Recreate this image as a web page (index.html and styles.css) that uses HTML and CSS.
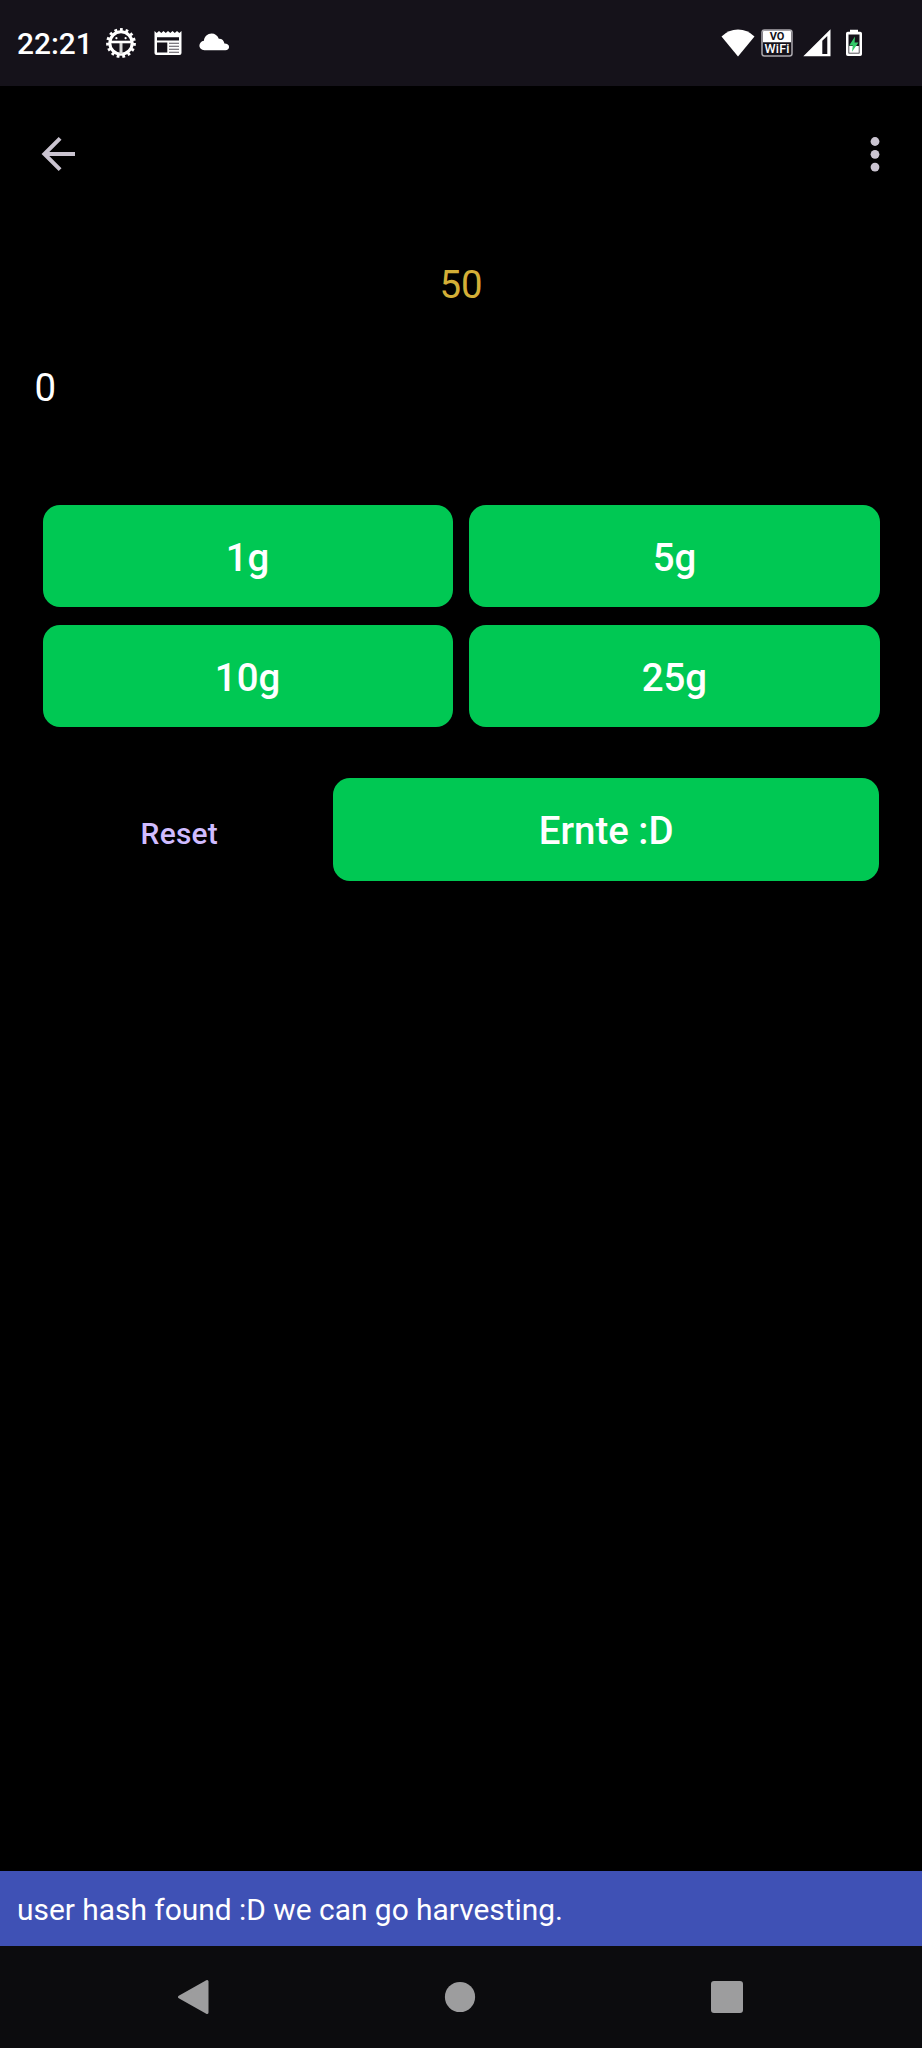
FILE: index.html
```html
<!DOCTYPE html>
<html lang="de">
<head>
<meta charset="utf-8">
<title>Ernte</title>
<link rel="stylesheet" href="styles.css">
</head>
<body>
<div class="screen">
  <header class="status">
    <div class="status-left">
      <span class="clock">22:21</span>
      <svg width="32" height="32" viewBox="-16 -16 32 32">
        <circle r="11.2" fill="none" stroke="#fff" stroke-width="3"/>
        <circle r="13.4" fill="none" stroke="#fff" stroke-width="3" stroke-dasharray="2.8 2.81"/>
        <path d="M-11-1H11" stroke="#fff" stroke-width="2.6"/>
        <path d="M0 0V11" stroke="#d8d8d8" stroke-width="3"/>
        <circle cx="-4.6" cy="-4.8" r="1.1" fill="#fff"/><circle cx="4.6" cy="-4.8" r="1.1" fill="#fff"/>
      </svg>
      <svg class="news" width="28" height="26" viewBox="0 0 28 26">
        <path d="M.5 1l2.2 2L5 1l2.300 2L9.500 1l2.300 2L14 1l2.300 2 2.200-2 2.300 2L23 1l2.300 2 2.200-2v22q0 2-2 2h-23q-2 0-2-2z" fill="#fff"/>
        <path d="M3 7.200h22v3.200H3zM3 12.400h10.300v10.200H3z" fill="#15121a"/>
        <path d="M15 13.200h10M15 16.200h10M15 19.200h10M15 22.200h10" stroke="#55525a" stroke-width="1.100"/>
      </svg>
      <svg class="cloud" width="31" height="18" viewBox="0 0 31 18">
        <path d="M5.500 17.200C2.400 17.200.4 15.200.4 12.600c0-2.500 1.800-4.500 4.500-4.900C5.400 3.600 8.600.6 12.600.6c3.300 0 6 2 7.200 5.200 3-.2 5.300 1.900 5.600 4.800 2.900.1 4.700 1.400 4.700 3.400 0 2-1.500 3.200-3.700 3.200z" fill="#fff"/>
      </svg>
    </div>
    <div class="status-right">
      <svg width="34" height="28" viewBox="0 0 34 28"><path d="M17 27.500L.5 7.500Q7.500.5 17 .5t16.500 7z" fill="#fff"/></svg>
      <svg class="vowifi" width="32" height="28" viewBox="0 0 32 28">
        <rect x="1" y="1" width="30" height="26" rx="2.500" fill="#15121a" stroke="#aaa8ad" stroke-width="1.500"/>
        <path d="M2 13.200V3q0-1.200 1.200-1.200h25.600Q30 1.800 30 3v10.200z" fill="#fff"/>
        <text x="16" y="11.200" class="vo">VO</text>
        <text x="16" y="24.200" class="wf" textLength="25">WiFi</text>
      </svg>
      <svg class="signal" width="28" height="28" viewBox="0 0 28 28"><path d="M.3 27.300L27.500.3v27zM19.300 11.700v13.200h5V7z" fill="#fff" fill-rule="evenodd"/></svg>
      <svg class="battery" width="18" height="28" viewBox="0 0 18 28">
        <path d="M5 .8h8v2h2.200q1.800 0 1.800 1.800v20.600q0 1.800-1.800 1.800H2.800Q1 27 1 25.200V4.600q0-1.800 1.800-1.800H5z" fill="#fff"/>
        <path d="M3.500 5.500h11v19h-11z" fill="#15121a"/>
        <path d="M4.200 17h9.600v6.800H4.200z" fill="#fff"/>
        <path d="M10 7.500L4.200 16.500h3.600L7 22.800l6.500-9.300H9.600z" fill="#33c968"/>
      </svg>
    </div>
  </header>

  <nav class="appbar">
    <svg width="36" height="36" viewBox="0 0 36 36"><path d="M34 18H4M19.100 2.300L3.400 18l15.700 15.700" fill="none" stroke="#cac4d0" stroke-width="4"/></svg>
    <svg width="10" height="36" viewBox="0 0 10 36" fill="#cac4d0"><circle cx="5" cy="5.500" r="4.400"/><circle cx="5" cy="18.300" r="4.400"/><circle cx="5" cy="31.100" r="4.400"/></svg>
  </nav>

  <main class="content">
    <p class="target">50</p>
    <p class="amount">0</p>
    <div class="grid">
      <button class="btn">1g</button>
      <button class="btn">5g</button>
      <button class="btn">10g</button>
      <button class="btn">25g</button>
    </div>
    <div class="actions">
      <button class="reset">Reset</button>
      <button class="btn">Ernte :D</button>
    </div>
  </main>

  <div class="message">user hash found :D we can go harvesting.</div>

  <footer class="navbar">
    <svg width="34" height="36" viewBox="0 0 34 36"><path d="M3.500 18L31 2.500v31z" fill="#9d9d9e" stroke="#9d9d9e" stroke-width="3" stroke-linejoin="round"/></svg>
    <svg width="34" height="36" viewBox="0 0 34 36"><circle cx="17" cy="18" r="15.100" fill="#9d9d9e"/></svg>
    <svg width="34" height="36" viewBox="0 0 34 36"><rect x="1" y="1.900" width="32" height="32" rx="3" fill="#9d9d9e"/></svg>
  </footer>
</div>
</body>
</html>
```
FILE: styles.css
```css
* { box-sizing: border-box; }
body {
  margin: 0;
  background: #000;
  font-family: Roboto, "Liberation Sans", sans-serif;
  color: #fff;
}
svg { display: block; flex: none; }
p { margin: 0; }
button { border: 0; margin: 0; background: none; font-family: inherit; }

.screen { height: 2048px; display: flex; flex-direction: column; }

.status {
  flex: none;
  height: 86px;
  padding: 0 59px 0 17px;
  background: #15121a;
  display: flex;
  justify-content: space-between;
  align-items: center;
}
.status-left, .status-right { display: flex; align-items: center; }
.clock { width: 87.500px; padding-top: 1px; font-size: 29.900px; font-weight: 500; line-height: 36px; }
.news { margin-left: 17px; }
.cloud { margin-left: 17px; margin-bottom: 2px; }
.vowifi { margin-left: 6px; }
.signal { margin-left: 10px; }
.battery { margin-left: 14px; }
.vo, .wf { text-anchor: middle; }
.vo { font-size: 11px; font-weight: 700; fill: #15121a; }
.wf { font-size: 12.600px; font-weight: 500; fill: #fff; }

.appbar {
  flex: none;
  height: 136px;
  padding: 0 42px 0 41px;
  display: flex;
  justify-content: space-between;
  align-items: center;
}

.content { flex: 1; padding: 0 42.700px; }
.target { margin-top: 40px; text-align: center; font-size: 38.400px; line-height: 46px; color: #d4af37; }
.amount { margin: 57px 0 0 -8.200px; font-size: 38.400px; line-height: 46px; }

.grid {
  margin-top: 94.100px;
  display: grid;
  grid-template-columns: 1fr 1fr;
  gap: 17.100px;
}
.btn {
  height: 102.400px;
  padding: 3px 0 0;
  border-radius: 17px;
  background: #00c853;
  color: #fff;
  font-size: 38.400px;
  font-weight: 500;
}
.grid .btn { margin: 0 -.2px; }
.actions { margin-top: 51.200px; display: grid; grid-template-columns: 273.200px 1fr; gap: 17.100px; }
.reset { padding: 9px 0 0; color: #d0bcff; font-size: 29.900px; font-weight: 500; letter-spacing: .25px; }

.message {
  flex: none;
  height: 74.700px;
  padding: 2px 17px 0;
  background: #3f51b5;
  display: flex;
  align-items: center;
  font-size: 29.900px;
}
.navbar {
  flex: none;
  height: 102px;
  padding: 0 178px 0 175.500px;
  background: #0c0c0e;
  display: flex;
  justify-content: space-between;
  align-items: center;
}
```
